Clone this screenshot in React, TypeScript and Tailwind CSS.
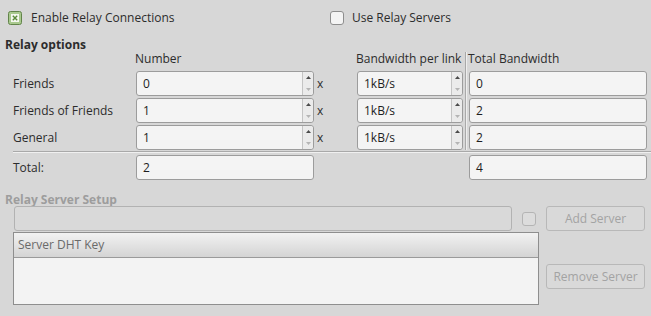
import React from "react";

const font = { fontFamily: '"Open Sans", "DejaVu Sans", sans-serif' };

const CheckedBox = () => (
  <svg width="14" height="14" viewBox="0 0 14 14" className="shrink-0">
    <rect x="0.5" y="0.5" width="13" height="13" rx="2" fill="#a9c98e" stroke="#62844a" />
    <rect x="3" y="3" width="8" height="8" fill="#f4f7ef" />
    <path d="M4.8 4.8 L9.2 9.2 M9.2 4.8 L4.8 9.2" stroke="#5a8a38" strokeWidth="1.4" />
  </svg>
);

const EmptyBox = ({ disabled }: { disabled?: boolean }) => (
  <div
    className={
      disabled
        ? "w-[14px] h-[14px] shrink-0 rounded-[3px] border border-[#b4b4b4] bg-[#dcdcdc]"
        : "w-[14px] h-[14px] shrink-0 rounded-[3px] border border-[#8e8e8e] bg-[#f4f4f4]"
    }
  />
);

const Field = ({ value }: { value?: string }) => (
  <div className="h-[25px] flex items-center rounded-[3px] border border-[#9c9c9c] bg-[#f4f4f4] pl-[6px] text-[#1e1e1e]">
    {value}
  </div>
);

const Spin = ({ value }: { value: string }) => (
  <div className="h-[25px] flex rounded-[3px] border border-[#9c9c9c] bg-[#f4f4f4] text-[#1e1e1e]">
    <div className="flex-1 flex items-center pl-[6px]">{value}</div>
    <div className="w-[11px] flex flex-col justify-between items-center border-l border-[#c4c4c4] bg-[#ebebeb] rounded-r-[3px] py-[4px]">
      <svg width="5" height="3" viewBox="0 0 5 3">
        <path d="M0 3 L2.5 0 L5 3 Z" fill="#4a4a4a" />
      </svg>
      <svg width="5" height="3" viewBox="0 0 5 3">
        <path d="M0 0 L2.5 3 L5 0 Z" fill="#b4b4b4" />
      </svg>
    </div>
  </div>
);

const rows = [
  { label: "Friends", num: "0", total: "0" },
  { label: "Friends of Friends", num: "1", total: "2" },
  { label: "General", num: "1", total: "2" },
];

export default function App() {
  return (
    <div style={font} className="w-[651px] h-[316px] overflow-hidden bg-[#d7d7d7] text-[12px] text-[#2c2c2c]">
      {/* top checkboxes */}
      <div className="flex items-center h-[17px] mt-[9px] pl-[8px]">
        <div className="flex items-center w-[322px]">
          <CheckedBox />
          <span className="ml-[9px]">Enable Relay Connections</span>
        </div>
        <EmptyBox />
        <span className="ml-[8px]">Use Relay Servers</span>
      </div>

      {/* relay options */}
      <div className="mt-[12px] pl-[5px] font-bold leading-[14px]">Relay options</div>
      <div className="ml-[13px] grid grid-cols-[123px_178px_43px_106px_6px_178px] grid-rows-[17px_25px_25px_25px] gap-y-[2px]">
        <div />
        <div className="leading-[14px] -ml-[1px]">Number</div>
        <div />
        <div className="leading-[14px] -ml-[1px] whitespace-nowrap">Bandwidth per link</div>
        <div className="row-span-4 flex justify-center">
          <div className="w-[1px] bg-[#a9a9a9]" />
          <div className="w-[1px] bg-[#eeeeee]" />
        </div>
        <div className="leading-[14px] -ml-[1px]">Total Bandwidth</div>
        {rows.map((r) => (
          <React.Fragment key={r.label}>
            <div className="flex items-center">{r.label}</div>
            <Spin value={r.num} />
            <div className="flex items-center pl-[3px]">x</div>
            <Spin value="1kB/s" />
            <Field value={r.total} />
          </React.Fragment>
        ))}
      </div>
      <div className="ml-[13px] mt-[1px] h-[1px] bg-[#a9a9a9]" />
      <div className="ml-[13px] h-[1px] bg-[#f0f0f0]" />
      <div className="ml-[13px] mt-[2px] grid grid-cols-[123px_178px_43px_106px_6px_178px]">
        <div className="flex items-center">Total:</div>
        <Field value="2" />
        <div />
        <div />
        <div />
        <Field value="4" />
      </div>

      {/* relay server setup */}
      <div className="mt-[13px] pl-[5px] font-bold leading-[13px] text-[#9d9d9d]">Relay Server Setup</div>
      <div className="flex ml-[13px]">
        <div className="w-[526px] flex flex-col">
          <div className="flex items-center">
            <div className="ml-[1px] w-[498px] h-[25px] rounded-[3px] border border-[#b2b2b2] bg-[#d9d9d9]" />
            <div className="ml-[10px]">
              <EmptyBox disabled />
            </div>
          </div>
          <div className="mt-[1px] h-[73px] border border-[#8e8e8e] bg-[#f3f3f3]">
            <div className="h-[25px] flex items-center pl-[4px] border-b border-[#9a9a9a] bg-gradient-to-b from-[#f2f2f2] to-[#d4d4d4] text-[#6a6a6a]">
              Server DHT Key
            </div>
          </div>
        </div>
        <div className="ml-[7px] w-[99px] flex flex-col">
          <div className="h-[25px] flex items-center justify-center rounded-[3px] border border-[#b8b8b8] bg-[#d9d9d9] text-[#a3a3a3]">
            Add Server
          </div>
          <div className="mt-[33px] h-[25px] flex items-center justify-center rounded-[3px] border border-[#b8b8b8] bg-[#d9d9d9] text-[#a3a3a3]">
            Remove Server
          </div>
        </div>
      </div>
    </div>
  );
}
